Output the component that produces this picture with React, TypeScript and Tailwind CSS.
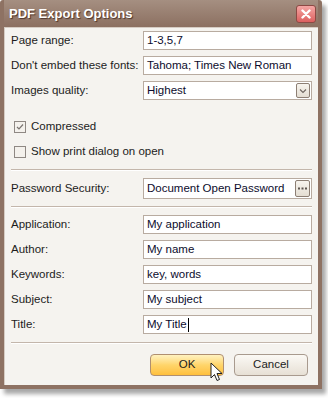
const FONT = "font-['Tahoma','Liberation_Sans',Arial,sans-serif]";

function TextRow({ label, value, caret }: { label: string; value: string; caret?: boolean }) {
  return (
    <div className="flex h-[19px] items-center">
      <span className="w-[138px] whitespace-nowrap pl-[6px] text-[11.5px] text-[#1c1c1c]">{label}</span>
      <div className="flex h-[19px] w-[169px] items-center whitespace-nowrap border border-[#b8aba0] bg-white pl-[3px] text-[11.5px] text-[#0c0c2c]">
        {value}
        {caret && <span className="ml-px inline-block h-[14px] w-px bg-black" />}
      </div>
    </div>
  );
}

function Checkbox({ label, checked }: { label: string; checked?: boolean }) {
  return (
    <div className="flex h-[14px] items-center pl-[9px]">
      <span className="flex h-[12px] w-[12px] items-center justify-center border border-[#8f8883] bg-[#f4f1ec]">
        {checked && (
          <svg width="8" height="8" viewBox="0 0 8 8">
            <path d="M1 4 L3 6 L7 1.5" fill="none" stroke="#7a7470" strokeWidth="1.2" />
          </svg>
        )}
      </span>
      <span className="ml-[5px] whitespace-nowrap text-[11.5px] text-[#1c1c1c]">{label}</span>
    </div>
  );
}

function Separator() {
  return <div className="mx-[6px] h-px bg-[#c3b6ab] shadow-[0_1px_0_#ffffff]" />;
}

export default function App() {
  return (
    <div className={`h-[398px] w-[328px] bg-white ${FONT}`}>
      <div className="flex h-[389px] w-[322px] flex-col rounded-t-[3px] bg-[#8e7263] px-[4px] pb-[4px] shadow-[4px_5px_4px_rgba(0,0,0,0.35)]">
        {/* Title bar */}
        <div className="flex h-[27px] items-center justify-between bg-gradient-to-b from-[#a58f81] to-[#8c7061] pl-[5px] pr-[2px]">
          <span className="text-[13px] font-bold text-white [text-shadow:1px_1px_1px_rgba(60,35,25,0.8)]">
            PDF Export Options
          </span>
          <div className="flex h-[18px] w-[20px] items-center justify-center rounded-[3px] border border-[#8c4a44] bg-gradient-to-b from-[#f4a6a4] to-[#dc5f5f]">
            <svg width="10" height="10" viewBox="0 0 10 10">
              <path d="M1.5 1.5 L8.5 8.5 M8.5 1.5 L1.5 8.5" stroke="white" strokeWidth="2.4" strokeLinecap="round" />
            </svg>
          </div>
        </div>

        {/* Body */}
        <div className="relative flex flex-1 flex-col border-l border-t border-[#d6ccc3] bg-[#f5f3ef] pt-[3px]">
          <div className="flex flex-col gap-[6px]">
            <TextRow label="Page range:" value="1-3,5,7" />
            <TextRow label="Don't embed these fonts:" value="Tahoma; Times New Roman" />
            <div className="flex h-[19px] items-center">
              <span className="w-[138px] whitespace-nowrap pl-[6px] text-[11.5px] text-[#1c1c1c]">Images quality:</span>
              <div className="flex h-[19px] w-[169px] items-center justify-between border border-[#b8aba0] bg-white pl-[3px] pr-px text-[11.5px] text-[#0c0c2c]">
                Highest
                <span className="flex h-[15px] w-[14px] items-center justify-center rounded-[2px] border border-[#8d7f74] bg-gradient-to-b from-[#f7f4ee] to-[#e4ddd2]">
                  <svg width="8" height="6" viewBox="0 0 8 6">
                    <path d="M1 1.5 L4 4.5 L7 1.5" fill="none" stroke="#6d645e" strokeWidth="1.1" />
                  </svg>
                </span>
              </div>
            </div>
          </div>

          <div className="mt-[20px] flex flex-col gap-[11px]">
            <Checkbox label="Compressed" checked />
            <Checkbox label="Show print dialog on open" />
          </div>

          <div className="mt-[10px]">
            <Separator />
          </div>

          <div className="mt-[8px] flex h-[21px] items-center">
            <span className="w-[138px] whitespace-nowrap pl-[6px] text-[11.5px] text-[#1c1c1c]">Password Security:</span>
            <div className="flex h-[21px] w-[169px] items-center justify-between whitespace-nowrap border border-[#b8aba0] bg-white pl-[3px] pr-px text-[11.5px] text-[#0c0c2c]">
              Document Open Password
              <span className="flex h-[17px] w-[15px] items-center justify-center rounded-[2px] border border-[#8d7f74] bg-gradient-to-b from-[#f7f4ee] to-[#e4ddd2]">
                <svg width="9" height="3" viewBox="0 0 9 3">
                  <rect x="0" y="0.5" width="2" height="2" fill="#5e5650" />
                  <rect x="3.5" y="0.5" width="2" height="2" fill="#5e5650" />
                  <rect x="7" y="0.5" width="2" height="2" fill="#5e5650" />
                </svg>
              </span>
            </div>
          </div>

          <div className="mt-[7px]">
            <Separator />
          </div>

          <div className="mt-[8px] flex flex-col gap-[6px]">
            <TextRow label="Application:" value="My application" />
            <TextRow label="Author:" value="My name" />
            <TextRow label="Keywords:" value="key, words" />
            <TextRow label="Subject:" value="My subject" />
            <TextRow label="Title:" value="My Title" caret />
          </div>

          <div className="mt-[8px]">
            <Separator />
          </div>

          <div className="mt-[11px] flex justify-end gap-[10px] pr-[10px]">
            <button className="relative h-[22px] w-[74px] rounded-[4px] border border-[#b08f70] bg-gradient-to-b from-[#fff2bf] via-[#ffd56a] to-[#ffbf3a] text-[11.5px] text-[#1c1c1c]">
              OK
              <svg className="absolute left-[59px] top-[7px]" width="13" height="21" viewBox="0 0 13 21">
                <path d="M1 1 L1 16 L4.5 12.5 L7 18.5 L9.5 17.5 L7 11.5 L12 11.5 Z" fill="white" stroke="#222" strokeWidth="1" strokeLinejoin="round" />
              </svg>
            </button>
            <button className="h-[22px] w-[74px] rounded-[4px] border border-[#a89a8e] bg-gradient-to-b from-[#fbf9f5] to-[#e7e0d5] text-[11.5px] text-[#1c1c1c]">
              Cancel
            </button>
          </div>
        </div>
      </div>
    </div>
  );
}
